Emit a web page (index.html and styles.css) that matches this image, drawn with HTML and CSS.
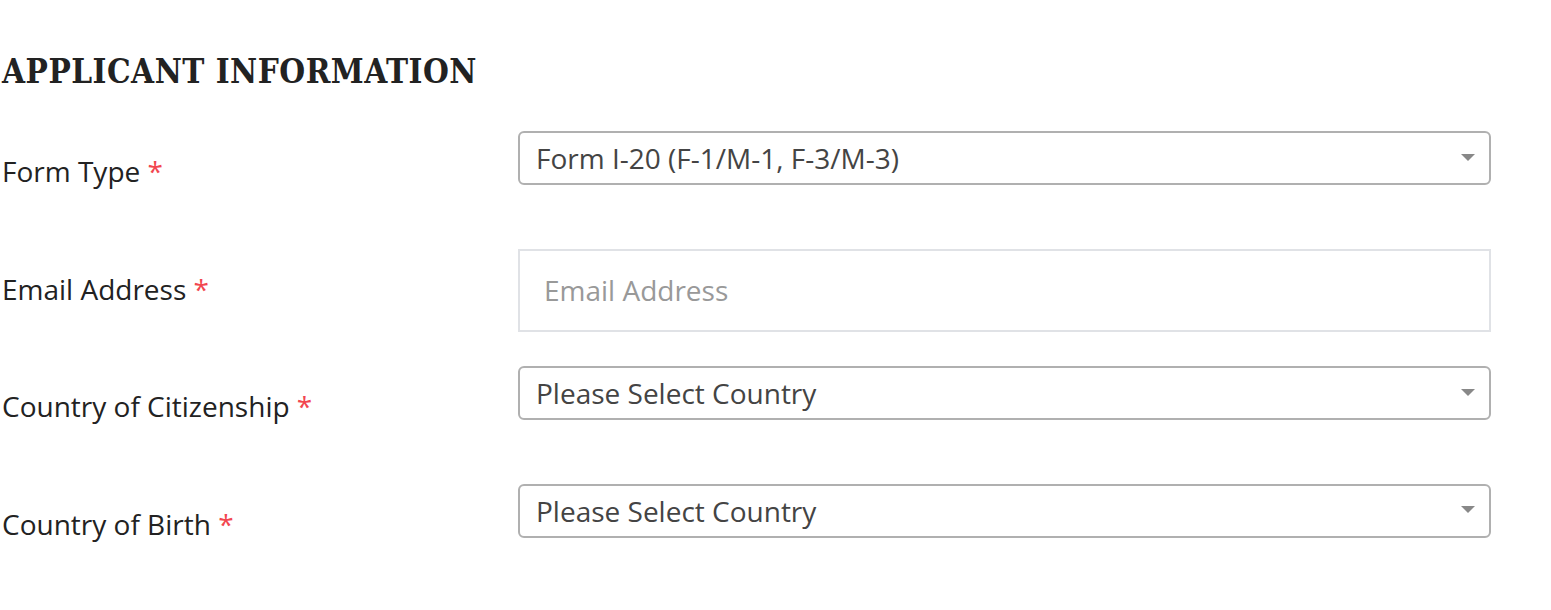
FILE: index.html
```html
<!DOCTYPE html>
<html>
<head>
<meta charset="utf-8">
<link rel="stylesheet" href="styles.css">
</head>
<body>
<div class="page">
  <h2 class="title">APPLICANT INFORMATION</h2>
  <div class="row">
    <label class="label">Form Type <span class="req">*</span></label>
    <div class="select"><span class="value">Form I-20 (F-1/M-1, F-3/M-3)</span><span class="caret"></span></div>
  </div>
  <div class="row">
    <label class="label">Email Address <span class="req">*</span></label>
    <div class="input"><span class="placeholder">Email Address</span></div>
  </div>
  <div class="row">
    <label class="label">Country of Citizenship <span class="req">*</span></label>
    <div class="select"><span class="value">Please Select Country</span><span class="caret"></span></div>
  </div>
  <div class="row">
    <label class="label">Country of Birth <span class="req">*</span></label>
    <div class="select"><span class="value">Please Select Country</span><span class="caret"></span></div>
  </div>
</div>
</body>
</html>
```
FILE: styles.css
```css
html, body { margin: 0; padding: 0; background: #fff; }
.page {
  padding: 0 0 0 2px;
  font-family: "Open Sans", "Liberation Sans", sans-serif;
  color: #222;
}
.title {
  margin: 0;
  padding-top: 52px;
  height: 79px;
  box-sizing: border-box;
  font-family: "DejaVu Serif", serif;
  font-stretch: condensed;
  font-weight: bold;
  font-size: 33px;
  letter-spacing: 0.5px;
  line-height: 40px;
  color: #222;
}
.row {
  display: grid;
  grid-template-columns: 516px 973px;
  min-height: 117.5px;
  align-items: start;
}
.row:first-of-type { margin-top: 52px; }
.label {
  font-size: 28px;
  line-height: 34px;
  padding-top: 23px;
}
.req { color: #f2464f; }
.select {
  height: 54px;
  box-sizing: border-box;
  border: 2px solid #b0b0b0;
  border-radius: 6px;
  display: flex;
  align-items: center;
  justify-content: space-between;
  padding: 0 14px 0 16px;
  font-size: 28px;
  color: #444;
}
.caret {
  width: 0; height: 0;
  border-left: 7px solid transparent;
  border-right: 7px solid transparent;
  border-top: 7px solid #888;
  margin-top: -2px;
}
.input {
  height: 83px;
  box-sizing: border-box;
  border: 2px solid #e0e2e6;
  display: flex;
  align-items: center;
  padding: 0 24px;
  font-size: 28px;
}
.placeholder { color: #999; }
```
